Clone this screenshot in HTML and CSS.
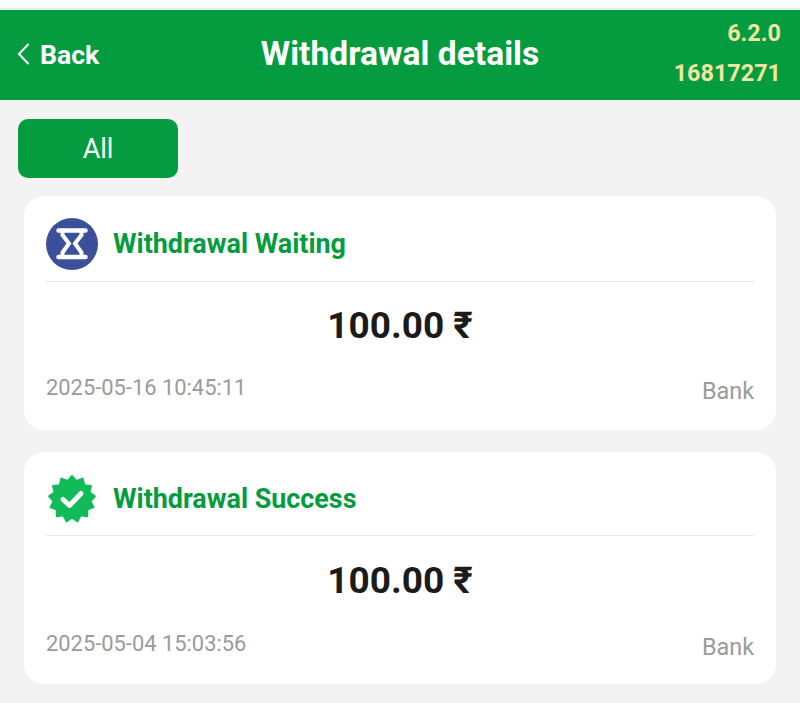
FILE: index.html
```html
<!DOCTYPE html>
<html lang="en">
<head>
  <meta charset="UTF-8">
  <meta name="viewport" content="width=device-width, initial-scale=1.0">
  <title>Withdrawal details</title>
  <link rel="stylesheet" href="styles.css">
</head>
<body>
  <div class="top-strip"></div>

  <!-- Header -->
  <div class="header">
    <div class="back">
      <svg class="back-icon" width="14" height="24" viewBox="0 0 14 24">
        <path d="M12.5 2 L3 12 L12.5 22" fill="none" stroke="#fff" stroke-width="2"/>
      </svg>
      <span>Back</span>
    </div>
    <div class="title">Withdrawal details</div>
    <div class="version">
      <span>6.2.0</span>
      <span>16817271</span>
    </div>
  </div>

  <!-- Filter -->
  <div class="filter">
    <button class="filter-btn">All</button>
  </div>

  <!-- Records -->
  <div class="list">
    <div class="card">
      <div class="card-head">
        <svg class="status-icon" width="52" height="52" viewBox="0 0 52 52">
          <circle cx="26" cy="26" r="26" fill="#3b4f9b"/>
          <path d="M12.5 12.5 H39.5 M12.5 39 H39.5" stroke="#fff" stroke-width="4.5" stroke-linecap="round"/>
          <path d="M16.5 12 V17 L23 25.5 L16.5 34.5 V39 H35.5 V34.5 L29 25.5 L35.5 17 V12" fill="none" stroke="#fff" stroke-width="4"/>
        </svg>
        <span class="status">Withdrawal Waiting</span>
      </div>
      <div class="amount">100.00 ₹</div>
      <div class="card-foot">
        <span class="time">2025-05-16 10:45:11</span>
        <span class="method">Bank</span>
      </div>
    </div>

    <div class="card card-second">
      <div class="card-head">
        <svg class="status-icon" width="52" height="52" viewBox="0 0 52 52">
          <polygon fill="#10bb58" stroke="#10bb58" stroke-width="2" stroke-linejoin="round" points="26,3 30.43,8.04 36.69,5.63 38.27,12.15 44.93,12.93 43.3,19.44 48.83,23.23 44.36,28.23 47.51,34.16 41.23,36.51 41.25,43.22 34.6,42.38 31.5,48.33 26,44.5 20.5,48.33 17.4,42.38 10.75,43.22 10.77,36.51 4.49,34.16 7.64,28.23 3.17,23.23 8.7,19.44 7.07,12.93 13.73,12.15 15.31,5.63 21.57,8.04"/>
          <path d="M17 26.5 L23.5 32.5 L35 20.5" fill="none" stroke="#fff" stroke-width="5" stroke-linecap="round" stroke-linejoin="round"/>
        </svg>
        <span class="status">Withdrawal Success</span>
      </div>
      <div class="amount">100.00 ₹</div>
      <div class="card-foot">
        <span class="time">2025-05-04 15:03:56</span>
        <span class="method">Bank</span>
      </div>
    </div>
  </div>
</body>
</html>
```

FILE: styles.css
```css
body {
  font-family: Roboto, 'Liberation Sans', sans-serif;
  background-color: #f3f3f4;
  margin: 0;
  padding: 0;
  height: 703px;
  overflow: hidden;
}
.top-strip {
  height: 8px;
  background-color: #f7fff9;
  border-bottom: 2px solid #e2efea;
}
.header {
  height: 90px;
  background-color: #049c3e;
  display: flex;
  align-items: center;
  justify-content: space-between;
  padding: 0 20px 4px 18px;
  box-sizing: border-box;
  position: relative;
}
.back {
  display: flex;
  align-items: center;
  gap: 7px;
  color: #fff;
  font-size: 26.6px;
  font-weight: 700;
  margin-top: 2px;
}
.back-icon {
  margin-left: -2px;
  margin-right: 3px;
}
.title {
  position: absolute;
  left: 0;
  right: 0;
  text-align: center;
  color: #fff;
  font-size: 33.6px;
  font-weight: 700;
}
.version {
  display: flex;
  flex-direction: column;
  align-items: flex-end;
  gap: 12px;
  color: #f2e6a2;
  font-size: 23.4px;
  font-weight: 700;
  margin-right: -1px;
}
.filter {
  padding: 19px 18px 0;
}
.filter-btn {
  display: block;
  width: 160px;
  height: 59px;
  border: none;
  border-radius: 10px;
  background-color: #049c3e;
  color: #fff;
  font-family: inherit;
  font-size: 27px;
}
.list {
  padding: 18px 24px 0;
}
.card {
  background-color: #fff;
  border-radius: 20px;
  padding: 0 22px;
  height: 234px;
  box-sizing: border-box;
}
.card-second {
  height: 232px;
  margin-top: 22px;
}
.card-head {
  height: 75px;
  padding-top: 10px;
  display: flex;
  align-items: center;
  gap: 15px;
  border-bottom: 1px solid #e6e6e6;
}
.card-second .card-head {
  height: 73px;
}
.status {
  color: #049c3e;
  font-size: 26.9px;
  font-weight: 700;
}
.amount {
  text-align: center;
  color: #1b1b1b;
  font-size: 37px;
  font-weight: 700;
  margin-top: 22px;
}
.card-second .amount {
  margin-top: 23px;
}
.card-foot {
  display: flex;
  justify-content: space-between;
  align-items: flex-start;
  margin-top: 27px;
  color: #9b9b9b;
  font-size: 23.4px;
}
.card-second .card-foot {
  margin-top: 28px;
}
.time {
  font-size: 21.9px;
  margin-top: 1px;
}
.method {
  margin-top: 3px;
}
```
